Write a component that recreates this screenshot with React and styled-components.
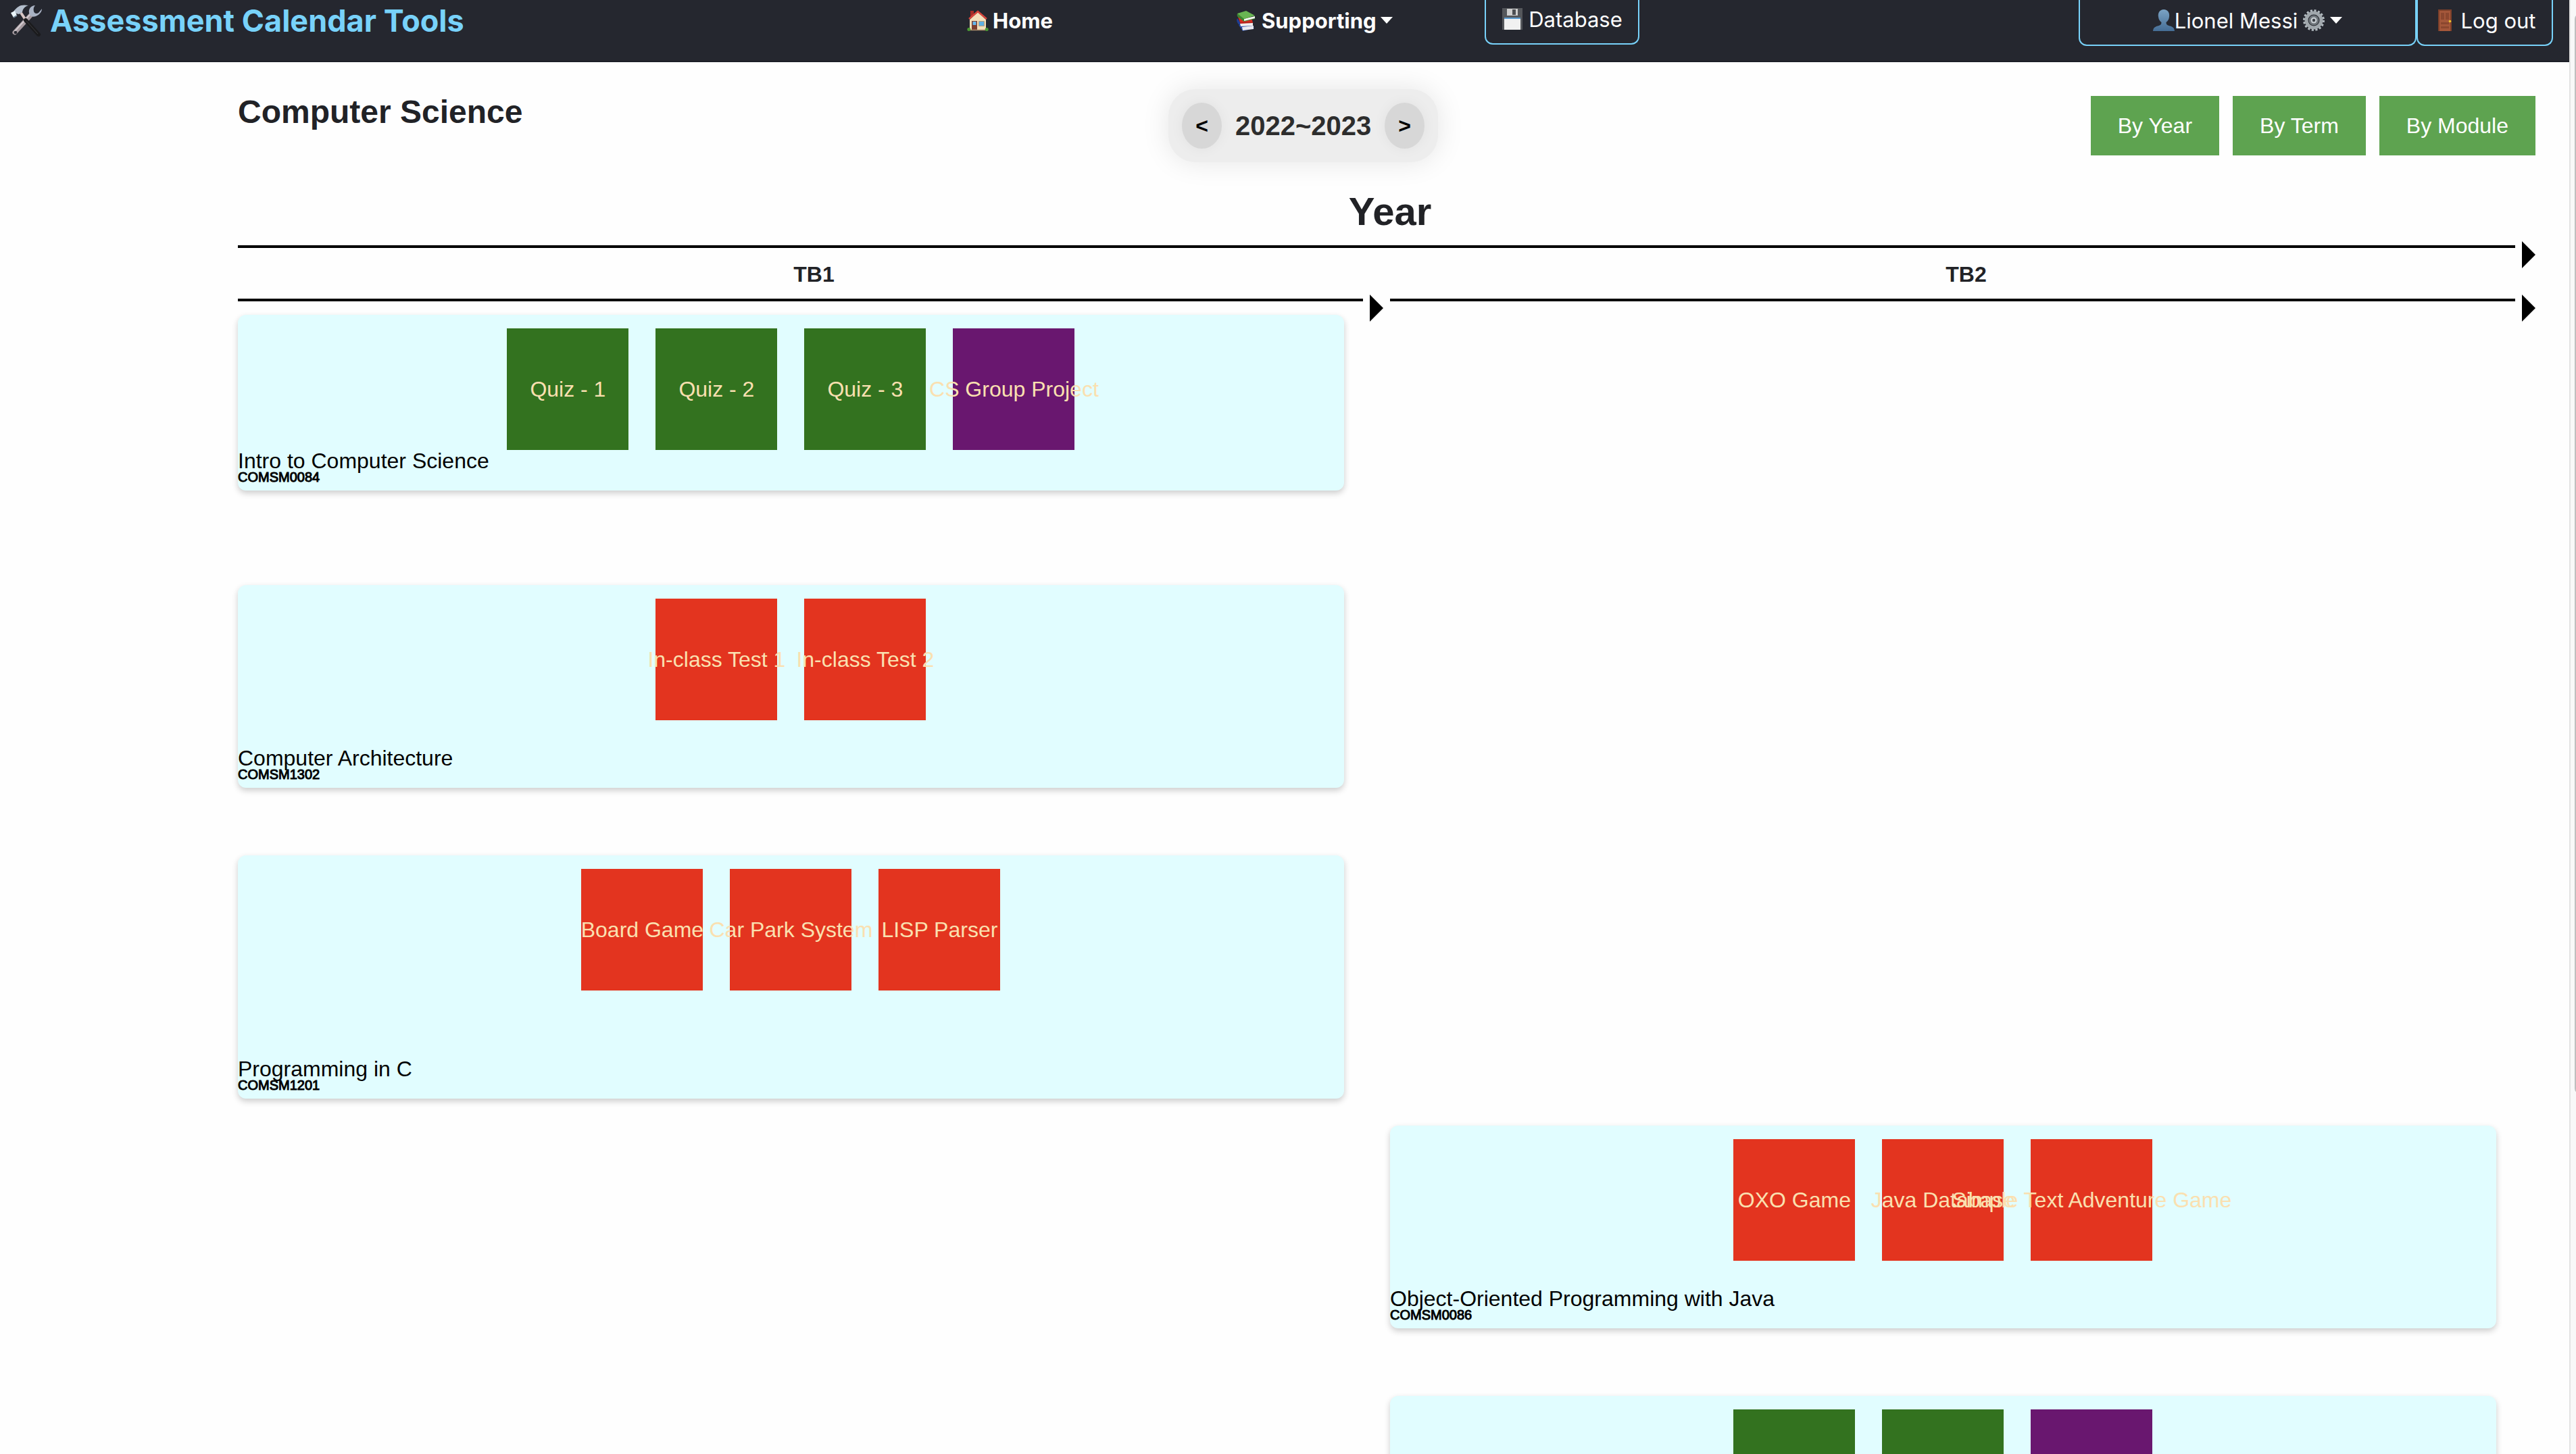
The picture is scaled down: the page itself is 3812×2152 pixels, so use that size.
import React from 'react';
import styled, { createGlobalStyle } from 'styled-components';

const GlobalStyle = createGlobalStyle`
  *, *::before, *::after { box-sizing: border-box; }
  body {
    margin: 0;
    background: #fefefe;
    color: #212226;
    font-family: "Liberation Sans", Arial, sans-serif;
    font-size: 32px;
  }
  h1, h2, h3, p, ul { margin: 0; padding: 0; }
  button { font: inherit; cursor: pointer; }
`;

const Shell = styled.div`
  display: flex;
  height: 100vh;
  overflow: hidden;
`;

const Page = styled.div`
  flex: 1;
  min-width: 0;
  overflow: hidden;
`;

const ScrollRail = styled.div`
  flex: none;
  width: 10px;
  padding: 20px 0 0 6px;
  overflow: hidden;
  background: #f8f8f8;
  border-left: 2px solid #e3e3e3;
`;

const ScrollThumb = styled.div`
  width: 16px;
  height: 75%;
  border-radius: 8px;
  background: #bfbfbf;
`;

const NavBar = styled.header`
  display: grid;
  grid-template-columns: minmax(0, 26fr) auto minmax(0, 25fr);
  align-items: start;
  height: 92px;
  background: #25272f;
  border-bottom: 2px solid #1d1f27;
  font-family: Inter, "Liberation Sans", sans-serif;
`;

const Brand = styled.a`
  display: flex;
  align-items: flex-start;
  gap: 12px;
  padding-left: 14px;
  color: #78d2fa;
  font-size: 45px;
  font-weight: 700;
  line-height: 62px;
  text-decoration: none;
  white-space: nowrap;
`;

const NavLinks = styled.nav`
  display: grid;
  grid-template-columns: 398px 368px auto;
  align-items: start;
`;

const Account = styled.div`
  display: flex;
  justify-content: flex-end;
  padding-right: 24px;
`;

const navItem = `
  display: flex;
  align-items: center;
  gap: 6px;
  padding: 7px 0 0;
  border: 0;
  background: none;
  color: #ffffff;
  line-height: 48px;
  text-decoration: none;
  white-space: nowrap;
`;

const NavLink = styled.a`
  ${navItem}
  font-weight: 700;
  font-size: 31px;
`;

const NavMenu = styled.button`
  ${navItem}
  && { font-weight: 700; font-size: 31px; }
`;

const NavButton = styled.button`
  ${navItem}
  && { font-size: 31px; }
  align-items: flex-start;
  justify-content: center;
  width: ${(p) => p.$width}px;
  height: ${(p) => p.$height}px;
  padding-top: ${(p) => p.$height - 61}px;
  gap: 8px;
  border: 2px solid #78d2fa;
  border-top: 0;
  border-radius: 0 0 12px 12px;
`;

const UserName = styled.span`
  display: flex;
  align-items: flex-start;
`;

const Emoji = styled.svg`
  flex: none;
  width: ${(p) => p.$size || 32}px;
  height: ${(p) => p.$size || 32}px;
  margin-top: ${(p) => p.$top || 0}px;
`;

const Caret = styled.span`
  flex: none;
  align-self: flex-start;
  margin-top: 18px;
  border: 9px solid transparent;
  border-top: 10px solid #ffffff;
  border-bottom: 0;
`;

const Main = styled.main`
  padding: 40px 40px 0 352px;
`;

const Toolbar = styled.div`
  display: flex;
  justify-content: space-between;
  align-items: flex-start;
`;

const Title = styled.h1`
  font-size: 48px;
  line-height: 68px;
  font-weight: bold;
`;

const YearPicker = styled.div`
  display: flex;
  align-items: center;
  gap: 20px;
  padding: 20px;
  border-radius: 40px;
  background: #ededed;
  box-shadow: 0 0 40px rgba(0, 0, 0, 0.1);
`;

const YearStep = styled.button`
  padding: 16px 20px;
  border: 0;
  border-radius: 50%;
  background: #d7d7d7;
  box-shadow: 0 0 20px rgba(0, 0, 0, 0.05);
  color: #000000;
  && { font-weight: bold; }
  line-height: 36px;
`;

const YearRange = styled.span`
  color: #2d2d2d;
  font-size: 40px;
  font-weight: bold;
  line-height: 48px;
`;

const ViewSwitch = styled.div`
  display: flex;
`;

const ViewButton = styled.button`
  margin: 10px;
  padding: 20px 40px;
  border: 0;
  background: #5ea350;
  color: #ffffff;
  line-height: 48px;
`;

const YearHeading = styled.h2`
  margin: 43px 0 14px;
  font-size: 58px;
  line-height: 60px;
  text-align: center;
`;

const Terms = styled.div`
  display: grid;
  grid-template-columns: 1fr 1fr;
`;

const TermHeading = styled.h3`
  margin-bottom: 11px;
  font-size: 32px;
  line-height: 38px;
  text-align: center;
`;

const ArrowRow = styled.div`
  display: flex;
  align-items: flex-start;
  gap: 10px;
  height: 30px;
  padding-right: 10px;
`;

const ArrowLine = styled.div`
  flex: 1;
  height: 4px;
  margin-top: 6px;
  background: #000000;
`;

const ArrowHead = styled.div`
  border: 20px solid transparent;
  border-left-color: #000000;
  border-right: 0;
`;

const Board = styled.div`
  display: grid;
  grid-template-columns: 1fr 1fr;
  grid-auto-rows: 400px;
  align-items: start;
`;

const Card = styled.section`
  grid-column: ${(p) => p.$term};
  grid-row: ${(p) => p.$row};
  display: flex;
  flex-direction: column;
  justify-content: space-between;
  width: 96%;
  min-height: ${(p) => p.$span}px;
  padding: 20px 0 10px;
  border-radius: 12px;
  background: #e1fdff;
  box-shadow: 0 4px 10px rgba(0, 0, 0, 0.2);
  color: #000000;
`;

const Assessments = styled.ul`
  display: flex;
  justify-content: center;
  gap: 40px;
  list-style: none;
`;

const tones = { quiz: '#33721f', project: '#69176f', coursework: '#e3341f' };

const Assessment = styled.li`
  display: flex;
  align-items: center;
  justify-content: center;
  width: 180px;
  height: 180px;
  background: ${(p) => tones[p.$kind]};
  color: #fae0b0;
  white-space: nowrap;
`;

const ModuleName = styled.p`
  line-height: 28px;
`;

const ModuleCode = styled.p`
  font-size: 20px;
  line-height: 20px;
  -webkit-text-stroke: 1px #000000;
`;

const ToolsIcon = () => (
  <Emoji viewBox="0 0 48 48" $size={48} $top={6} aria-hidden="true">
    <path d="M8 42 31 17" stroke="#a59a9f" strokeWidth="7" strokeLinecap="round" />
    <path d="M8 40 30 16" stroke="#d3cbd0" strokeWidth="2" strokeLinecap="round" />
    <path d="M38 2c-6 0-10 5-9 11 1 6 7 7 12 4 4-2 7-6 7-10l-5 6c-3 2-6 1-7-2-1-4 0-7 2-9z" fill="#a9b2c3" />
    <circle cx="9" cy="42" r="2.300" fill="#25272f" />
    <path d="M17 13 25 25" stroke="#d8c6c4" strokeWidth="4" />
    <path d="M24 24 43 45" stroke="#1b1b1d" strokeWidth="6" strokeLinecap="round" />
    <path d="M25 25 42 44" stroke="#3b3b3f" strokeWidth="1" />
    <path d="M6 11C12 3 17 0 28 2c-6 2-8 5-9 10l-5 3-4-1z" fill="#b4bfcd" />
    <path d="m2 13 6-3 3 7-5 3z" fill="#e9f4fa" />
    <path d="m6 20 5-3" stroke="#6c8293" strokeWidth="2" />
  </Emoji>
);

const HouseIcon = () => (
  <Emoji viewBox="0 0 32 32" aria-hidden="true">
    <path d="M5 1h5v9H5z" fill="#a52d28" />
    <path d="M16 3 4 14v16h24V14z" fill="#f3dfbb" />
    <path d="m3 13 13-11 13 11" fill="none" stroke="#d6453c" strokeWidth="2.500" />
    <path d="M7 16h8v14H7z" fill="#7d4030" />
    <path d="M8.500 17h5v5h-5z" fill="#65b6ec" />
    <path d="M17.500 16.500h8v7h-8z" fill="#5fb0e4" stroke="#b59b78" />
    <path d="M5 29.500h22" stroke="#a98b69" strokeWidth="1.500" />
    <circle cx="2.800" cy="28.500" r="2.500" fill="#4d9a35" />
    <circle cx="29.200" cy="28.500" r="2.500" fill="#4d9a35" />
  </Emoji>
);

const BooksIcon = () => (
  <Emoji viewBox="0 0 32 32" aria-hidden="true">
    <path d="m4 22 20-1 3 6-17 4z" fill="#2a4ca3" />
    <path d="m9 25 17-2v5l-16 2z" fill="#e9e9ef" />
    <path d="M2 12c-2 3 0 7 2 9l4 3-1-5z" fill="#1e3e95" />
    <path d="m3 10 20 1 2 8-18 2z" fill="#d62b22" />
    <path d="m6 20 19-1v4l-18 1z" fill="#f0eeee" />
    <path d="m6 19 19-1" stroke="#a21c18" />
    <path d="M2 5c-1 3 0 5 2 6l8 6 16-4V9L12 12z" fill="#3c8431" />
    <path d="m12 13 16-4v3l-16 4z" fill="#f5f4f1" />
    <path d="m2 5 13-4 13 7-16 5z" fill="#69b553" />
  </Emoji>
);

const FloppyIcon = () => (
  <Emoji viewBox="0 0 32 32" $top={7} aria-hidden="true">
    <path d="M1 0h30v32H1z" fill="#55575b" />
    <path d="M8 1h16v10H8z" fill="#cfcfcf" />
    <path d="M16 2h5v8h-5z" fill="#4c4e52" />
    <path d="M4 14h24v18H4z" fill="#f1f1f1" />
    <path d="M4 14h24v2H4z" fill="#5a9ad0" />
  </Emoji>
);

const PersonIcon = () => (
  <Emoji viewBox="0 0 32 32" $top={7} aria-hidden="true">
    <defs>
      <linearGradient id="person" x1="0" y1="0" x2="0" y2="1">
        <stop offset="0" stopColor="#7ba3c4" />
        <stop offset="1" stopColor="#456d95" />
      </linearGradient>
    </defs>
    <path d="M16 0c-6 0-9 5-8 11 .500 4 2 6 4.500 8 0 3-1 4-4 5-4 1-8 2-8.500 8h32c-.500-6-4.500-7-8.500-8-3-1-4-2-4-5 2.500-2 4-4 4.500-8 1-6-2-11-8-11z" fill="url(#person)" />
  </Emoji>
);

const GearIcon = () => (
  <Emoji viewBox="0 0 32 32" $top={7} aria-hidden="true">
    <circle cx="16" cy="16" r="14" fill="none" stroke="#b3bbc1" strokeWidth="4" strokeDasharray="3 2.500" />
    <circle cx="16" cy="16" r="11" fill="none" stroke="#a0a7ac" strokeWidth="5" />
    <circle cx="16" cy="16" r="7.500" fill="#6f767b" />
    <circle cx="16" cy="16" r="4.500" fill="#c5cbd0" />
    <circle cx="16" cy="16" r="2.200" fill="#3b3f45" />
  </Emoji>
);

const DoorIcon = () => (
  <Emoji viewBox="0 0 32 32" $top={7} aria-hidden="true">
    <path d="M6 0h20v32H6z" fill="#7d402a" />
    <path d="M8 2h16v30H8z" fill="#a4573a" />
    <path d="M10 5h5v10h-5zM17 5h5v10h-5zM10 19h12v3H10zM10 25h12v3H10z" fill="#8b472f" />
    <circle cx="23.500" cy="17.500" r="1.800" fill="#f0c62b" />
  </Emoji>
);

const modules = [
  {
    id: 'intro', term: 1, span: 260, name: 'Intro to Computer Science', code: 'COMSM0084',
    items: [['quiz', 'Quiz - 1'], ['quiz', 'Quiz - 2'], ['quiz', 'Quiz - 3'], ['project', 'CS Group Project']],
  },
  {
    id: 'arch', term: 1, span: 300, name: 'Computer Architecture', code: 'COMSM1302',
    items: [['coursework', 'In-class Test 1'], ['coursework', 'In-class Test 2']],
  },
  {
    id: 'c', term: 1, span: 360, name: 'Programming in C', code: 'COMSM1201',
    items: [['coursework', 'Board Game'], ['coursework', 'Car Park System'], ['coursework', 'LISP Parser']],
  },
  {
    id: 'java', term: 2, span: 300, name: 'Object-Oriented Programming with Java', code: 'COMSM0086',
    items: [['coursework', 'OXO Game'], ['coursework', 'Java Database'], ['coursework', 'Simple Text Adventure Game']],
  },
  { id: 'next', term: 2, span: 300, items: [['quiz'], ['quiz'], ['project']] },
];

const Arrow = () => (
  <ArrowRow>
    <ArrowLine />
    <ArrowHead />
  </ArrowRow>
);

const ModuleCard = ({ module, row }) => (
  <Card $term={module.term} $row={row} $span={module.span}>
    <Assessments>
      {module.items.map(([kind, label], i) => (
        <Assessment key={i} $kind={kind}>{label}</Assessment>
      ))}
    </Assessments>
    {module.name && (
      <div>
        <ModuleName>{module.name}</ModuleName>
        <ModuleCode>{module.code}</ModuleCode>
      </div>
    )}
  </Card>
);

export default function App() {
  return (
    <Shell>
      <GlobalStyle />
      <Page>
        <NavBar>
          <Brand href="#"><ToolsIcon />Assessment Calendar Tools</Brand>
          <NavLinks>
            <NavLink href="#home"><HouseIcon />Home</NavLink>
            <NavMenu type="button"><BooksIcon />Supporting<Caret /></NavMenu>
            <NavButton type="button" $width={229} $height={66}><FloppyIcon />Database</NavButton>
          </NavLinks>
          <Account>
            <NavButton type="button" $width={500} $height={68}>
              <UserName><PersonIcon />Lionel Messi</UserName>
              <GearIcon />
              <Caret />
            </NavButton>
            <NavButton type="button" $width={202} $height={68}><DoorIcon />Log out</NavButton>
          </Account>
        </NavBar>
        <Main>
          <Toolbar>
            <Title>Computer Science</Title>
            <YearPicker>
              <YearStep type="button">&lt;</YearStep>
              <YearRange>2022~2023</YearRange>
              <YearStep type="button">&gt;</YearStep>
            </YearPicker>
            <ViewSwitch>
              <ViewButton type="button">By Year</ViewButton>
              <ViewButton type="button">By Term</ViewButton>
              <ViewButton type="button">By Module</ViewButton>
            </ViewSwitch>
          </Toolbar>
          <YearHeading>Year</YearHeading>
          <Arrow />
          <Terms>
            {['TB1', 'TB2'].map((term) => (
              <div key={term}>
                <TermHeading>{term}</TermHeading>
                <Arrow />
              </div>
            ))}
          </Terms>
          <Board>
            {modules.map((m, i) => <ModuleCard key={m.id} module={m} row={i + 1} />)}
          </Board>
        </Main>
      </Page>
      <ScrollRail>
        <ScrollThumb />
      </ScrollRail>
    </Shell>
  );
}
